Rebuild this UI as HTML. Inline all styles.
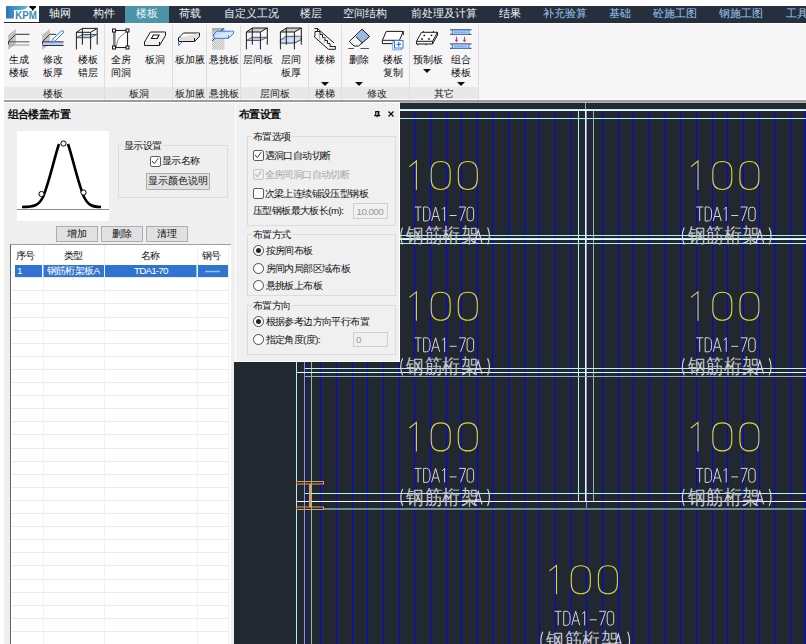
<!DOCTYPE html>
<html><head><meta charset="utf-8">
<style>
*{margin:0;padding:0;box-sizing:border-box}
body{width:806px;height:644px;overflow:hidden;position:relative;background:#fff;font-family:"Liberation Sans",sans-serif;color:#000}
.a{position:absolute}
.t{position:absolute;white-space:nowrap;font-size:11.3px;line-height:12px;color:#eceff3;top:7px;margin-left:0px}
.rl{position:absolute;white-space:nowrap;font-size:9.5px;line-height:12.5px;color:#111;text-align:center}
.gl{position:absolute;white-space:nowrap;font-size:9.5px;line-height:12px;color:#222;top:88px}
.sep{position:absolute;top:25px;width:1px;height:75px;background:#dedede}
.arr{position:absolute;width:0;height:0;border-left:4px solid transparent;border-right:4px solid transparent;border-top:4px solid #111}
.p{position:absolute;white-space:nowrap;font-size:9.9px;letter-spacing:-0.6px;line-height:11px;color:#111}
.cb{position:absolute;width:10.5px;height:10.5px;border:1.4px solid #5c5c5c;border-radius:2px;background:#fff}
.rd{position:absolute;width:11px;height:11px;border:1.2px solid #4a4a4a;border-radius:50%;background:#fff}
.gb{position:absolute;border:1px solid #dcdcdc}
.btn{position:absolute;border:1px solid #adadad;background:#e1e1e1;font-size:9.6px;line-height:14px;text-align:center;color:#111}
</style></head><body>

<!-- ===== top bar ===== -->
<div class="a" style="left:39px;top:6px;width:767px;height:17px;background:#262f3d"></div>
<div class="a" style="left:125px;top:6px;width:44px;height:17px;background:#4b93a7"></div>
<div class="a" style="left:4px;top:22px;width:35px;height:1px;background:#222"></div>
<!-- logo -->
<svg class="a" style="left:0;top:0" width="40" height="22">
  <defs><linearGradient id="lg1" x1="0" x2="1"><stop offset="0" stop-color="#2e6fb0"/><stop offset="1" stop-color="#4a90c8"/></linearGradient>
  <linearGradient id="lg2" x1="0" x2="1"><stop offset="0" stop-color="#3b8fc0"/><stop offset="1" stop-color="#5cc0d0"/></linearGradient></defs>
  <rect x="6" y="6" width="8" height="12.5" rx="1" fill="url(#lg1)"/>
  <path d="M14 6 H28 Q26 10 20 10 H14 Z" fill="url(#lg2)"/>
  <linearGradient id="lg3" x1="0" y1="0" x2="0" y2="1"><stop offset="0" stop-color="#40a8c8"/><stop offset="1" stop-color="#2a70a8"/></linearGradient><text x="15.3" y="18.5" font-family="Liberation Sans" font-weight="bold" font-size="10.6" fill="url(#lg3)" textLength="21.6" lengthAdjust="spacingAndGlyphs">KPM</text>
  <path d="M29.3 6 H36 V7.2 L33.6 9.2 V10.6 H32 V9.2 L29.3 7.2 Z" fill="#000"/>
</svg>
<div class="t" style="left:49px">轴网</div>
<div class="t" style="left:93px">构件</div>
<div class="t" style="left:136px;color:#eef4f6">楼板</div>
<div class="t" style="left:179px">荷载</div>
<div class="t" style="left:223.5px">自定义工况</div>
<div class="t" style="left:300px">楼层</div>
<div class="t" style="left:343px">空间结构</div>
<div class="t" style="left:410.5px">前处理及计算</div>
<div class="t" style="left:499px">结果</div>
<div class="t" style="left:543px;color:#9cc6ee">补充验算</div>
<div class="t" style="left:608.5px;color:#9cc6ee">基础</div>
<div class="t" style="left:653px;color:#9cc6ee">砼施工图</div>
<div class="t" style="left:719px;color:#9cc6ee">钢施工图</div>
<div class="t" style="left:785.5px;color:#9cc6ee">工具</div>

<!-- ===== ribbon ===== -->
<div class="a" style="left:4px;top:24px;width:802px;height:75px;background:#f6f6f6"></div>
<div class="a" style="left:4px;top:87px;width:475px;height:12px;background:#e8e8e8"></div>
<div class="a" style="left:4px;top:100px;width:802px;height:2px;background:#9c9c9c"></div>
<div class="a" style="left:400px;top:102px;width:406px;height:1px;background:#b4b4b4"></div>
<div class="sep" style="left:104px"></div>
<div class="sep" style="left:172px"></div>
<div class="sep" style="left:206px"></div>
<div class="sep" style="left:240px"></div>
<div class="sep" style="left:308px"></div>
<div class="sep" style="left:341px"></div>
<div class="sep" style="left:409px"></div>
<div class="sep" style="left:478px"></div>


<svg class="a" style="left:0;top:0" width="490" height="54" viewBox="0 0 490 54">
<defs>
 <linearGradient id="gw" x1="0" y1="0" x2="0" y2="1"><stop offset="0" stop-color="#b2b2b2"/><stop offset="1" stop-color="#d4d4d4"/></linearGradient>
 <linearGradient id="gt" x1="0" y1="0" x2="0" y2="1"><stop offset="0" stop-color="#a8a8a8"/><stop offset="1" stop-color="#e8e8e8"/></linearGradient>
 <pattern id="chk" width="2" height="2" patternUnits="userSpaceOnUse"><rect width="2" height="2" fill="#e6e6e6"/><rect width="1" height="1" fill="#c2c2c2"/><rect x="1" y="1" width="1" height="1" fill="#c2c2c2"/></pattern>
</defs>
<!-- 生成楼板 -->
<path d="M8.1 35 L15.8 29 V44 L8.1 50 Z" fill="#c0c0c0"/>
<path d="M8.5 44.2 V41.6 L15.8 34.3 H29.5" fill="none" stroke="#333" stroke-width="1"/>
<path d="M8.5 41.8 H29.5" stroke="#555" stroke-width="1"/>
<path d="M8.5 45 H29.5" stroke="#9a9a9a" stroke-width="1"/>
<!-- 修改板厚 -->
<path d="M42.1 35 L49.8 29 V44 L42.1 50 Z" fill="#c0c0c0"/>
<rect x="42.5" y="41.8" width="21" height="3.6" fill="#b4cdf0"/>
<path d="M42.5 44.2 V41.6 L49.8 34.3 H56" fill="none" stroke="#333" stroke-width="1"/>
<path d="M42.5 41.8 H63.5 M42.5 45.5 H63.5" stroke="#333" stroke-width="1"/>
<path d="M51.5 42.8 L53 39 L61.3 31 Q63.5 30.2 63.8 32.2 L55.5 40.6 Z" fill="#fff" stroke="#3a7ad8" stroke-width="1"/>
<!-- 楼板错层 -->
<path d="M76.4 37.7 L82.4 34.5 H96.6 L90.6 37.7 Z" fill="#b4cdf0" stroke="#333" stroke-width="0.8"/>
<path d="M76.4 49.4 V32.3 H90.6 V49.4 M82.4 44.6 V28.4 H97.2 V44.6 M76.4 32.3 L82.4 28.4 M90.6 32.3 L97.2 28.4" fill="none" stroke="#1a1a1a" stroke-width="1"/>
<!-- 全房间洞 -->
<rect x="114" y="30.5" width="13.5" height="17" fill="#fff" stroke="#222" stroke-width="1.1"/>
<path d="M116.3 47.5 C117 42 118 38 121 36 C124 34 126 32 127 30.8" fill="none" stroke="#777" stroke-width="0.9"/>
<path d="M115.5 31.5 V47" stroke="#999" stroke-width="0.8"/>
<g fill="#fff" stroke="#111" stroke-width="1"><rect x="112.5" y="29" width="3" height="3"/><rect x="126" y="29" width="3" height="3"/><rect x="112.5" y="46" width="3" height="3"/><rect x="126" y="46" width="3" height="3"/></g>
<!-- 板洞 -->
<path d="M144.5 42 L150.5 32 H165.5 L159.5 42 Z" fill="#fff" stroke="#1a1a1a" stroke-width="1"/>
<path d="M144.5 42 V45.5 H159.5 L165.5 35.5 V32 M159.5 42 V45.5" fill="#f0f0f0" stroke="#1a1a1a" stroke-width="1"/>
<path d="M151.5 38.5 L153.3 35 H159 L157.2 38.5 Z" fill="#fff" stroke="#1a1a1a" stroke-width="1.1"/>
<!-- 板加腋 -->
<path d="M178.5 38 L183.5 33 H199.5 L194.5 38 Z" fill="#fff" stroke="#1a1a1a" stroke-width="1"/>
<path d="M178.5 38 V41.5 H194.5 L199.5 36.5 V33 M194.5 38 V41.5" fill="#e0e0e0" stroke="#1a1a1a" stroke-width="1"/>
<path d="M178.5 41.5 V45.5 L182.5 41.5" fill="none" stroke="#3a7ad8" stroke-width="1"/>
<!-- 悬挑板 -->
<rect x="212" y="28" width="12.5" height="9" fill="url(#gt)"/>
<rect x="212" y="37" width="12.5" height="12.8" fill="url(#chk)"/>
<path d="M212.3 41 L223.5 28.3" stroke="#222" stroke-width="1"/>
<path d="M212.8 35.3 L216.8 31.2 H233.5 L228.5 35.3 Z" fill="#c8dcf6" stroke="#3a7ad8" stroke-width="1"/>
<path d="M214 35.3 V38.3 H228.5 L233.5 33.5 V31.2 M228.5 35.3 V38.3" fill="#dbe8fa" stroke="#3a7ad8" stroke-width="1"/>
<!-- 层间板 -->
<path d="M246.4 32 L252.3 28 H267.3 L260.4 32 Z" fill="#cfcfcf"/>
<path d="M246.4 40.5 L252.3 37.3 H267.3 L260.4 40.5 Z" fill="#b4cdf0" stroke="#444" stroke-width="0.8"/>
<path d="M246.4 49.4 V32 H260.4 V49.4 M252.3 44.7 V28 H267.3 V44.7 M246.4 32 L252.3 28 M260.4 32 L267.3 28" fill="none" stroke="#1a1a1a" stroke-width="1"/>
<!-- 层间板厚 -->
<path d="M280.4 32 L286.3 28 H301.3 L294.4 32 Z" fill="#cfcfcf"/>
<path d="M280.4 39.9 L286.3 36.3 H301.3 L294.4 39.9 Z" fill="#b4cdf0" stroke="#444" stroke-width="0.8"/>
<path d="M280.4 39.9 V43.1 H294.4 L301.3 39.5 V36.3 M294.4 39.9 V43.1" fill="#cfe0f8" stroke="#333" stroke-width="0.9"/>
<path d="M280.4 49.4 V32 H294.4 V49.4 M286.3 44.7 V28 H301.3 V44.7 M280.4 32 L286.3 28 M294.4 32 L301.3 28" fill="none" stroke="#1a1a1a" stroke-width="1"/>
<!-- 楼梯 -->
<path d="M314.5 28.5 H317.5 L334 43 M317.5 28.5 V31.5 H315 V34.5 L314.5 37 L328.5 49.3 H335.3 V46" fill="none" stroke="#1a1a1a" stroke-width="1"/>
<path d="M317.5 31.5 H320 V34.5 H322.5 V37.5 H325 V40.5 H327.5 V43.5 H330 V46.5 H335.3" fill="none" stroke="#1a1a1a" stroke-width="1"/>
<path d="M319 33 L320 40 M324 37 L324.5 43" stroke="#999" stroke-width="0.8"/>
<!-- 删除 -->
<path d="M362 29.2 L369.6 36.5 L362.3 43 L355.8 36.6 Z" fill="#9ab9e8"/>
<path d="M362 29.2 L369.6 36.5 L358.5 46 H354 L349.3 41.5 Z M355.8 36.6 L362.3 43" fill="none" stroke="#1a1a1a" stroke-width="1"/>
<path d="M348.2 48.5 H354 M360.4 48.5 H369" stroke="#555" stroke-width="1"/>
<!-- 楼板复制 -->
<path d="M382.4 40.3 L386.3 31.4 H403.3 L399.4 40.3 Z" fill="#fff" stroke="#1a1a1a" stroke-width="1"/>
<path d="M382.4 40.3 V43.6 H393 M399.4 40.3 V41 M403.3 31.4 V35" fill="none" stroke="#1a1a1a" stroke-width="1"/>
<rect x="392.8" y="41.8" width="8.5" height="8" fill="#fff" stroke="#7aa6e6" stroke-width="1"/>
<rect x="394.5" y="40.5" width="8.5" height="7.5" fill="#fff" stroke="#3a7ad8" stroke-width="1"/>
<path d="M398.7 42 V46.5 M396.5 44.3 H401" stroke="#3a7ad8" stroke-width="1.3"/>
<!-- 预制板 -->
<path d="M416.5 41.3 L421.5 32.3 H437.5 L432.5 41.3 Z" fill="#fff" stroke="#1a1a1a" stroke-width="1"/>
<path d="M416.5 41.3 V44 H432.5 L437.5 35 V32.3 M432.5 41.3 V44" fill="none" stroke="#1a1a1a" stroke-width="1"/>
<g fill="#1a1a1a"><circle cx="424.3" cy="35.3" r="0.9"/><circle cx="431.5" cy="35.3" r="0.9"/><circle cx="422" cy="39" r="0.9"/><circle cx="429" cy="39" r="0.9"/></g>
<path d="M423.5 32.3 V31 M433.5 32.3 V31 M418 44 V45.3 M426 44 V45.3" stroke="#1a1a1a" stroke-width="1"/>
<!-- 组合楼板 -->
<path d="M450 29.8 H471.5 M450 34.3 H471.5 M450 44 H471.5 M450 48.3 H471.5" stroke="#222" stroke-width="0.9"/>
<rect x="452.3" y="30" width="16.6" height="4.2" fill="#cfe0f8" stroke="#3a7ad8" stroke-width="1"/>
<rect x="452.3" y="44" width="16.6" height="4.2" fill="#cfe0f8" stroke="#3a7ad8" stroke-width="1"/>
<path d="M454 32.1 H467 M454 46.1 H467" stroke="#3a7ad8" stroke-width="0.8"/>
<path d="M456.5 36.8 V41.5 M464.5 36.8 V41.5" stroke="#d04040" stroke-width="1.1"/>
<path d="M454.6 39.8 L456.5 42.3 L458.4 39.8 Z M462.6 39.8 L464.5 42.3 L466.4 39.8 Z" fill="#d04040"/>
</svg>


<div class="rl" style="left:9px;top:54px">生成<br>楼板</div>
<div class="rl" style="left:43px;top:54px">修改<br>板厚</div>
<div class="rl" style="left:77.5px;top:54px">楼板<br>错层</div>
<div class="rl" style="left:111px;top:54px">全房<br>间洞</div>
<div class="rl" style="left:145px;top:54px">板洞</div>
<div class="rl" style="left:174.5px;top:54px">板加腋</div>
<div class="rl" style="left:208.5px;top:54px">悬挑板</div>
<div class="rl" style="left:242.5px;top:54px">层间板</div>
<div class="rl" style="left:280.5px;top:54px">层间<br>板厚</div>
<div class="rl" style="left:315px;top:54px">楼梯</div>
<div class="rl" style="left:349px;top:54px">删除</div>
<div class="rl" style="left:383px;top:54px">楼板<br>复制</div>
<div class="rl" style="left:412.5px;top:54px">预制板</div>
<div class="rl" style="left:450.5px;top:54px">组合<br>楼板</div>
<div class="arr" style="left:321px;top:82px"></div>
<div class="arr" style="left:355px;top:82px"></div>
<div class="arr" style="left:423px;top:69px"></div>
<div class="arr" style="left:457px;top:82px"></div>

<div class="gl" style="left:43px">楼板</div>
<div class="gl" style="left:128.5px">板洞</div>
<div class="gl" style="left:174.5px">板加腋</div>
<div class="gl" style="left:208.5px">悬挑板</div>
<div class="gl" style="left:260px">层间板</div>
<div class="gl" style="left:315px">楼梯</div>
<div class="gl" style="left:366.5px">修改</div>
<div class="gl" style="left:434px">其它</div>

<!-- ===== left panel ===== -->
<div class="a" style="left:4px;top:103px;width:231px;height:541px;background:#efefef"></div>
<div class="p" style="left:7.5px;top:108px;font-size:11px;line-height:12px;font-weight:bold">组合楼盖布置</div>


<!-- image box -->
<svg class="a" style="left:17px;top:131px" width="92" height="90">
  <rect width="92" height="90" fill="#fff"/>
  <line x1="0" y1="78.5" x2="92" y2="78.5" stroke="#8a8a8a" stroke-width="1"/>
  <path d="M5 76 C18 76 22 74 26 66 C32 52 37 28 42 13" fill="none" stroke="#000" stroke-width="2.6"/>
  <path d="M51 13 C56 28 61 52 67 66 C71 74 75 76 84 76" fill="none" stroke="#000" stroke-width="2.6"/>
  <circle cx="46.5" cy="12.5" r="2.6" fill="#fff" stroke="#000" stroke-width="1"/>
  <circle cx="24.5" cy="63" r="2.6" fill="#fff" stroke="#000" stroke-width="1"/>
  <circle cx="66.5" cy="61.5" r="2.6" fill="#fff" stroke="#000" stroke-width="1"/>
</svg>
<div class="gb" style="left:117.5px;top:145px;width:110.5px;height:53px"></div>
<div class="p" style="left:123px;top:140px;padding:0 1px;background:#efefef">显示设置</div>
<div class="cb" style="left:150px;top:156px"></div>
<svg class="a" style="left:150px;top:156px" width="10" height="10"><path d="M2 5 L4.3 7.6 L8.3 2.2" fill="none" stroke="#3a3a3a" stroke-width="1"/></svg>
<div class="p" style="left:162px;top:155px">显示名称</div>
<div class="btn" style="left:146px;top:173px;width:64px;height:17px">显示颜色说明</div>
<div class="btn" style="left:56px;top:226px;width:42px;height:16px">增加</div>
<div class="btn" style="left:101px;top:226px;width:42px;height:16px">删除</div>
<div class="btn" style="left:146px;top:226px;width:42px;height:16px">清理</div>
<!-- table -->
<div class="a" style="left:10px;top:244px;width:221px;height:400px;background:#fff;border-left:1px solid #646464;border-top:1px solid #a0a0a0"></div>
<svg class="a" style="left:11px;top:245px" width="220" height="399">
<line x1="1" y1="32.5" x2="218" y2="32.5" stroke="#ebebeb" stroke-width="1"/>
<line x1="1" y1="45.5" x2="218" y2="45.5" stroke="#ebebeb" stroke-width="1"/>
<line x1="1" y1="58.5" x2="218" y2="58.5" stroke="#ebebeb" stroke-width="1"/>
<line x1="1" y1="72.5" x2="218" y2="72.5" stroke="#ebebeb" stroke-width="1"/>
<line x1="1" y1="85.5" x2="218" y2="85.5" stroke="#ebebeb" stroke-width="1"/>
<line x1="1" y1="98.5" x2="218" y2="98.5" stroke="#ebebeb" stroke-width="1"/>
<line x1="1" y1="111.5" x2="218" y2="111.5" stroke="#ebebeb" stroke-width="1"/>
<line x1="1" y1="124.5" x2="218" y2="124.5" stroke="#ebebeb" stroke-width="1"/>
<line x1="1" y1="137.5" x2="218" y2="137.5" stroke="#ebebeb" stroke-width="1"/>
<line x1="1" y1="150.5" x2="218" y2="150.5" stroke="#ebebeb" stroke-width="1"/>
<line x1="1" y1="163.5" x2="218" y2="163.5" stroke="#ebebeb" stroke-width="1"/>
<line x1="1" y1="176.5" x2="218" y2="176.5" stroke="#ebebeb" stroke-width="1"/>
<line x1="1" y1="189.5" x2="218" y2="189.5" stroke="#ebebeb" stroke-width="1"/>
<line x1="1" y1="203.5" x2="218" y2="203.5" stroke="#ebebeb" stroke-width="1"/>
<line x1="1" y1="216.5" x2="218" y2="216.5" stroke="#ebebeb" stroke-width="1"/>
<line x1="1" y1="229.5" x2="218" y2="229.5" stroke="#ebebeb" stroke-width="1"/>
<line x1="1" y1="242.5" x2="218" y2="242.5" stroke="#ebebeb" stroke-width="1"/>
<line x1="1" y1="255.5" x2="218" y2="255.5" stroke="#ebebeb" stroke-width="1"/>
<line x1="1" y1="268.5" x2="218" y2="268.5" stroke="#ebebeb" stroke-width="1"/>
<line x1="1" y1="281.5" x2="218" y2="281.5" stroke="#ebebeb" stroke-width="1"/>
<line x1="1" y1="294.5" x2="218" y2="294.5" stroke="#ebebeb" stroke-width="1"/>
<line x1="1" y1="307.5" x2="218" y2="307.5" stroke="#ebebeb" stroke-width="1"/>
<line x1="1" y1="320.5" x2="218" y2="320.5" stroke="#ebebeb" stroke-width="1"/>
<line x1="1" y1="334.5" x2="218" y2="334.5" stroke="#ebebeb" stroke-width="1"/>
<line x1="1" y1="347.5" x2="218" y2="347.5" stroke="#ebebeb" stroke-width="1"/>
<line x1="1" y1="360.5" x2="218" y2="360.5" stroke="#ebebeb" stroke-width="1"/>
<line x1="1" y1="373.5" x2="218" y2="373.5" stroke="#ebebeb" stroke-width="1"/>
<line x1="1" y1="386.5" x2="218" y2="386.5" stroke="#ebebeb" stroke-width="1"/>
<line x1="32.5" y1="0" x2="32.5" y2="399" stroke="#f1f1f1" stroke-width="1"/>
<line x1="93.5" y1="0" x2="93.5" y2="399" stroke="#f1f1f1" stroke-width="1"/>
<line x1="186.5" y1="0" x2="186.5" y2="399" stroke="#f1f1f1" stroke-width="1"/>
<line x1="217.5" y1="0" x2="217.5" y2="399" stroke="#f0f0f0" stroke-width="1"/>
<rect x="4" y="20" width="27" height="12" fill="#2f74d0"/>
<rect x="32.5" y="20" width="60.5" height="12" fill="#2f74d0"/>
<rect x="94" y="20" width="91.5" height="12" fill="#2f74d0"/>
<rect x="187" y="20" width="30" height="12" fill="#2f74d0"/>
<line x1="194" y1="26.5" x2="209" y2="26.5" stroke="#8cc0f0" stroke-width="1.5"/>
</svg>
<div class="p" style="left:15.5px;top:250px">序号</div>
<div class="p" style="left:63.5px;top:250px">类型</div>
<div class="p" style="left:141px;top:250px">名称</div>
<div class="p" style="left:202px;top:250px">钢号</div>
<div class="p" style="left:17px;top:265px;color:#fff">1</div>
<div class="p" style="left:46.5px;top:265px;color:#fff">钢筋桁架板A</div>
<div class="p" style="left:134px;top:265px;color:#fff;letter-spacing:-0.85px">TDA1-70</div>


<!-- ===== canvas ===== -->
<svg class="a" style="left:234px;top:103px" width="572" height="541" viewBox="0 0 572 541">
<rect width="572" height="541" fill="#222830"/>
<line x1="86.5" y1="8" x2="86.5" y2="541" stroke="#0000f2" stroke-width="1"/>
<line x1="102.5" y1="8" x2="102.5" y2="541" stroke="#0000f2" stroke-width="1"/>
<line x1="118.5" y1="8" x2="118.5" y2="541" stroke="#0000f2" stroke-width="1"/>
<line x1="133.5" y1="8" x2="133.5" y2="541" stroke="#0000f2" stroke-width="1"/>
<line x1="149.5" y1="8" x2="149.5" y2="541" stroke="#0000f2" stroke-width="1"/>
<line x1="165.5" y1="8" x2="165.5" y2="541" stroke="#0000f2" stroke-width="1"/>
<line x1="180.5" y1="8" x2="180.5" y2="541" stroke="#0000f2" stroke-width="1"/>
<line x1="196.5" y1="8" x2="196.5" y2="541" stroke="#0000f2" stroke-width="1"/>
<line x1="212.5" y1="8" x2="212.5" y2="541" stroke="#0000f2" stroke-width="1"/>
<line x1="227.5" y1="8" x2="227.5" y2="541" stroke="#0000f2" stroke-width="1"/>
<line x1="243.5" y1="8" x2="243.5" y2="541" stroke="#0000f2" stroke-width="1"/>
<line x1="258.5" y1="8" x2="258.5" y2="541" stroke="#0000f2" stroke-width="1"/>
<line x1="274.5" y1="8" x2="274.5" y2="541" stroke="#0000f2" stroke-width="1"/>
<line x1="290.5" y1="8" x2="290.5" y2="541" stroke="#0000f2" stroke-width="1"/>
<line x1="305.5" y1="8" x2="305.5" y2="541" stroke="#0000f2" stroke-width="1"/>
<line x1="321.5" y1="8" x2="321.5" y2="541" stroke="#0000f2" stroke-width="1"/>
<line x1="337.5" y1="8" x2="337.5" y2="541" stroke="#0000f2" stroke-width="1"/>
<line x1="352.5" y1="8" x2="352.5" y2="541" stroke="#0000f2" stroke-width="1"/>
<line x1="368.5" y1="8" x2="368.5" y2="541" stroke="#0000f2" stroke-width="1"/>
<line x1="384.5" y1="8" x2="384.5" y2="541" stroke="#0000f2" stroke-width="1"/>
<line x1="399.5" y1="8" x2="399.5" y2="541" stroke="#0000f2" stroke-width="1"/>
<line x1="415.5" y1="8" x2="415.5" y2="541" stroke="#0000f2" stroke-width="1"/>
<line x1="431.5" y1="8" x2="431.5" y2="541" stroke="#0000f2" stroke-width="1"/>
<line x1="446.5" y1="8" x2="446.5" y2="541" stroke="#0000f2" stroke-width="1"/>
<line x1="462.5" y1="8" x2="462.5" y2="541" stroke="#0000f2" stroke-width="1"/>
<line x1="478.5" y1="8" x2="478.5" y2="541" stroke="#0000f2" stroke-width="1"/>
<line x1="493.5" y1="8" x2="493.5" y2="541" stroke="#0000f2" stroke-width="1"/>
<line x1="509.5" y1="8" x2="509.5" y2="541" stroke="#0000f2" stroke-width="1"/>
<line x1="525.5" y1="8" x2="525.5" y2="541" stroke="#0000f2" stroke-width="1"/>
<line x1="540.5" y1="8" x2="540.5" y2="541" stroke="#0000f2" stroke-width="1"/>
<line x1="556.5" y1="8" x2="556.5" y2="541" stroke="#0000f2" stroke-width="1"/>
<line x1="571.5" y1="8" x2="571.5" y2="541" stroke="#0000f2" stroke-width="1"/>
<line x1="62.5" y1="0" x2="62.5" y2="541" stroke="#b4f2f2" stroke-width="1"/>
<line x1="70.5" y1="0" x2="70.5" y2="541" stroke="#9090f0" stroke-width="1"/>
<line x1="71.5" y1="0" x2="71.5" y2="541" stroke="#121a5a" stroke-width="1"/>
<line x1="77.5" y1="0" x2="77.5" y2="541" stroke="#8fb8b8" stroke-width="1"/>
<line x1="344.5" y1="7" x2="344.5" y2="398" stroke="#b4f2f2" stroke-width="1"/>
<line x1="359.5" y1="7" x2="359.5" y2="398" stroke="#8fb8b8" stroke-width="1"/>
<line x1="351.5" y1="0" x2="351.5" y2="6" stroke="#8ab4b4" stroke-width="1"/>
<line x1="351.5" y1="6" x2="351.5" y2="398" stroke="#f4f8f8" stroke-width="1"/>
<line x1="352.5" y1="7" x2="352.5" y2="406" stroke="#9090f0" stroke-width="1"/>
<line x1="62" y1="6.5" x2="572" y2="6.5" stroke="#b4f2f2" stroke-width="1"/>
<line x1="62" y1="7.5" x2="572" y2="7.5" stroke="#f4f8f8" stroke-width="1"/>
<line x1="71" y1="15.5" x2="572" y2="15.5" stroke="#b4f2f2" stroke-width="1"/>
<line x1="71" y1="132.5" x2="572" y2="132.5" stroke="#b4f2f2" stroke-width="1"/>
<line x1="71" y1="135.5" x2="572" y2="135.5" stroke="#b4f2f2" stroke-width="1"/>
<line x1="62" y1="136.5" x2="572" y2="136.5" stroke="#f4f8f8" stroke-width="1"/>
<line x1="71" y1="140.5" x2="572" y2="140.5" stroke="#b4f2f2" stroke-width="1"/>
<line x1="71" y1="265.5" x2="572" y2="265.5" stroke="#b4f2f2" stroke-width="1"/>
<line x1="62" y1="269.5" x2="572" y2="269.5" stroke="#f4f8f8" stroke-width="1"/>
<line x1="71" y1="273.5" x2="572" y2="273.5" stroke="#8fb8b8" stroke-width="1"/>
<line x1="71" y1="390.5" x2="572" y2="390.5" stroke="#b4f2f2" stroke-width="1"/>
<line x1="62" y1="398.5" x2="572" y2="398.5" stroke="#f4f8f8" stroke-width="1"/>
<line x1="90" y1="406" x2="572" y2="406" stroke="#6f8a8a" stroke-width="2"/>
<rect x="62.5" y="378.5" width="27" height="2.5" fill="none" stroke="#e0a050" stroke-width="1"/>
<rect x="62.5" y="404" width="27" height="2.5" fill="none" stroke="#e0a050" stroke-width="1"/>
<rect x="75" y="381" width="2" height="23" fill="#e0a050"/>
<path d="M175.39999999999998 63.599999999999994 L182.39999999999998 58 V87" fill="none" stroke="#dcd63c" stroke-width="1.1"/>
<path d="M197.2 69 C197.2 61 201.2 58.5 206.7 58.5 C212.2 58.5 216.2 61 216.2 69 V76 C216.2 84 212.2 86.5 206.7 86.5 C201.2 86.5 197.2 84 197.2 76 Z" fill="none" stroke="#dcd63c" stroke-width="1.1"/>
<path d="M224.29999999999995 69 C224.29999999999995 61 228.29999999999995 58.5 233.79999999999995 58.5 C239.29999999999995 58.5 243.29999999999995 61 243.29999999999995 69 V76 C243.29999999999995 84 239.29999999999995 86.5 233.79999999999995 86.5 C228.29999999999995 86.5 224.29999999999995 84 224.29999999999995 76 Z" fill="none" stroke="#dcd63c" stroke-width="1.1"/>
<path d="M180.60000000000002 104 H187.60000000000002 M184.10000000000002 104 V118 M189.60000000000002 104 V118 H192.60000000000002 Q196.10000000000002 118 196.10000000000002 111 Q196.10000000000002 104 192.60000000000002 104 Z M197.60000000000002 118 L201.60000000000002 104 L205.60000000000002 118 M199.10000000000002 113.5 H204.10000000000002 M208.10000000000002 106.5 L210.60000000000002 104 V118 M215.60000000000002 112.5 H222.60000000000002 M225.10000000000002 104 H231.60000000000002 L226.60000000000002 118" fill="none" stroke="#d4d4d4" stroke-width="1"/>
<rect x="233.10000000000002" y="104" width="6.5" height="14" rx="3.2" fill="none" stroke="#d4d4d4" stroke-width="1"/>
<path d="M168.60000000000002 124.5 Q164.89999999999998 133 168.60000000000002 141.5 M253.60000000000002 124.5 Q257.29999999999995 133 253.60000000000002 141.5" fill="none" stroke="#dcdcdc" stroke-width="1.1"/>
<g transform="translate(0 139.2) scale(1 1.14)"><text y="0" font-family="Liberation Sans" font-size="17.5" fill="#c8cacc">
<tspan x="172.10000000000002">钢</tspan>
<tspan x="190.79999999999995">筋</tspan>
<tspan x="208.10000000000002">桁</tspan>
<tspan x="226.69999999999993">架</tspan>
</text></g>
<path d="M240.39999999999998 140 L244.19999999999993 127 L248.0 140 M241.69999999999993 135.5 H246.69999999999993" fill="none" stroke="#dcdcdc" stroke-width="1.1"/>
<path d="M457 63.599999999999994 L464 58 V87" fill="none" stroke="#dcd63c" stroke-width="1.1"/>
<path d="M478.79999999999995 69 C478.79999999999995 61 482.79999999999995 58.5 488.29999999999995 58.5 C493.79999999999995 58.5 497.79999999999995 61 497.79999999999995 69 V76 C497.79999999999995 84 493.79999999999995 86.5 488.29999999999995 86.5 C482.79999999999995 86.5 478.79999999999995 84 478.79999999999995 76 Z" fill="none" stroke="#dcd63c" stroke-width="1.1"/>
<path d="M505.9 69 C505.9 61 509.9 58.5 515.4 58.5 C520.9 58.5 524.9 61 524.9 69 V76 C524.9 84 520.9 86.5 515.4 86.5 C509.9 86.5 505.9 84 505.9 76 Z" fill="none" stroke="#dcd63c" stroke-width="1.1"/>
<path d="M462.20000000000005 104 H469.20000000000005 M465.70000000000005 104 V118 M471.20000000000005 104 V118 H474.20000000000005 Q477.70000000000005 118 477.70000000000005 111 Q477.70000000000005 104 474.20000000000005 104 Z M479.20000000000005 118 L483.20000000000005 104 L487.20000000000005 118 M480.70000000000005 113.5 H485.70000000000005 M489.70000000000005 106.5 L492.20000000000005 104 V118 M497.20000000000005 112.5 H504.20000000000005 M506.70000000000005 104 H513.2 L508.20000000000005 118" fill="none" stroke="#d4d4d4" stroke-width="1"/>
<rect x="514.7" y="104" width="6.5" height="14" rx="3.2" fill="none" stroke="#d4d4d4" stroke-width="1"/>
<path d="M450.20000000000005 124.5 Q446.5 133 450.20000000000005 141.5 M535.2 124.5 Q538.9 133 535.2 141.5" fill="none" stroke="#dcdcdc" stroke-width="1.1"/>
<g transform="translate(0 139.2) scale(1 1.14)"><text y="0" font-family="Liberation Sans" font-size="17.5" fill="#c8cacc">
<tspan x="453.70000000000005">钢</tspan>
<tspan x="472.4">筋</tspan>
<tspan x="489.70000000000005">桁</tspan>
<tspan x="508.29999999999995">架</tspan>
</text></g>
<path d="M522 140 L525.8 127 L529.6 140 M523.3 135.5 H528.3" fill="none" stroke="#dcdcdc" stroke-width="1.1"/>
<path d="M175.39999999999998 194.40000000000003 L182.39999999999998 188.8 V217.8" fill="none" stroke="#dcd63c" stroke-width="1.1"/>
<path d="M197.2 199.8 C197.2 191.8 201.2 189.3 206.7 189.3 C212.2 189.3 216.2 191.8 216.2 199.8 V206.8 C216.2 214.8 212.2 217.3 206.7 217.3 C201.2 217.3 197.2 214.8 197.2 206.8 Z" fill="none" stroke="#dcd63c" stroke-width="1.1"/>
<path d="M224.29999999999995 199.8 C224.29999999999995 191.8 228.29999999999995 189.3 233.79999999999995 189.3 C239.29999999999995 189.3 243.29999999999995 191.8 243.29999999999995 199.8 V206.8 C243.29999999999995 214.8 239.29999999999995 217.3 233.79999999999995 217.3 C228.29999999999995 217.3 224.29999999999995 214.8 224.29999999999995 206.8 Z" fill="none" stroke="#dcd63c" stroke-width="1.1"/>
<path d="M180.60000000000002 234.8 H187.60000000000002 M184.10000000000002 234.8 V248.8 M189.60000000000002 234.8 V248.8 H192.60000000000002 Q196.10000000000002 248.8 196.10000000000002 241.8 Q196.10000000000002 234.8 192.60000000000002 234.8 Z M197.60000000000002 248.8 L201.60000000000002 234.8 L205.60000000000002 248.8 M199.10000000000002 244.3 H204.10000000000002 M208.10000000000002 237.3 L210.60000000000002 234.8 V248.8 M215.60000000000002 243.3 H222.60000000000002 M225.10000000000002 234.8 H231.60000000000002 L226.60000000000002 248.8" fill="none" stroke="#d4d4d4" stroke-width="1"/>
<rect x="233.10000000000002" y="234.8" width="6.5" height="14" rx="3.2" fill="none" stroke="#d4d4d4" stroke-width="1"/>
<path d="M168.60000000000002 255.3 Q164.89999999999998 263.8 168.60000000000002 272.3 M253.60000000000002 255.3 Q257.29999999999995 263.8 253.60000000000002 272.3" fill="none" stroke="#dcdcdc" stroke-width="1.1"/>
<g transform="translate(0 270.0) scale(1 1.14)"><text y="0" font-family="Liberation Sans" font-size="17.5" fill="#c8cacc">
<tspan x="172.10000000000002">钢</tspan>
<tspan x="190.79999999999995">筋</tspan>
<tspan x="208.10000000000002">桁</tspan>
<tspan x="226.69999999999993">架</tspan>
</text></g>
<path d="M240.39999999999998 270.8 L244.19999999999993 257.8 L248.0 270.8 M241.69999999999993 266.3 H246.69999999999993" fill="none" stroke="#dcdcdc" stroke-width="1.1"/>
<path d="M457 194.40000000000003 L464 188.8 V217.8" fill="none" stroke="#dcd63c" stroke-width="1.1"/>
<path d="M478.79999999999995 199.8 C478.79999999999995 191.8 482.79999999999995 189.3 488.29999999999995 189.3 C493.79999999999995 189.3 497.79999999999995 191.8 497.79999999999995 199.8 V206.8 C497.79999999999995 214.8 493.79999999999995 217.3 488.29999999999995 217.3 C482.79999999999995 217.3 478.79999999999995 214.8 478.79999999999995 206.8 Z" fill="none" stroke="#dcd63c" stroke-width="1.1"/>
<path d="M505.9 199.8 C505.9 191.8 509.9 189.3 515.4 189.3 C520.9 189.3 524.9 191.8 524.9 199.8 V206.8 C524.9 214.8 520.9 217.3 515.4 217.3 C509.9 217.3 505.9 214.8 505.9 206.8 Z" fill="none" stroke="#dcd63c" stroke-width="1.1"/>
<path d="M462.20000000000005 234.8 H469.20000000000005 M465.70000000000005 234.8 V248.8 M471.20000000000005 234.8 V248.8 H474.20000000000005 Q477.70000000000005 248.8 477.70000000000005 241.8 Q477.70000000000005 234.8 474.20000000000005 234.8 Z M479.20000000000005 248.8 L483.20000000000005 234.8 L487.20000000000005 248.8 M480.70000000000005 244.3 H485.70000000000005 M489.70000000000005 237.3 L492.20000000000005 234.8 V248.8 M497.20000000000005 243.3 H504.20000000000005 M506.70000000000005 234.8 H513.2 L508.20000000000005 248.8" fill="none" stroke="#d4d4d4" stroke-width="1"/>
<rect x="514.7" y="234.8" width="6.5" height="14" rx="3.2" fill="none" stroke="#d4d4d4" stroke-width="1"/>
<path d="M450.20000000000005 255.3 Q446.5 263.8 450.20000000000005 272.3 M535.2 255.3 Q538.9 263.8 535.2 272.3" fill="none" stroke="#dcdcdc" stroke-width="1.1"/>
<g transform="translate(0 270.0) scale(1 1.14)"><text y="0" font-family="Liberation Sans" font-size="17.5" fill="#c8cacc">
<tspan x="453.70000000000005">钢</tspan>
<tspan x="472.4">筋</tspan>
<tspan x="489.70000000000005">桁</tspan>
<tspan x="508.29999999999995">架</tspan>
</text></g>
<path d="M522 270.8 L525.8 257.8 L529.6 270.8 M523.3 266.3 H528.3" fill="none" stroke="#dcdcdc" stroke-width="1.1"/>
<path d="M175.39999999999998 325.0 L182.39999999999998 319.4 V348.4" fill="none" stroke="#dcd63c" stroke-width="1.1"/>
<path d="M197.2 330.4 C197.2 322.4 201.2 319.9 206.7 319.9 C212.2 319.9 216.2 322.4 216.2 330.4 V337.4 C216.2 345.4 212.2 347.9 206.7 347.9 C201.2 347.9 197.2 345.4 197.2 337.4 Z" fill="none" stroke="#dcd63c" stroke-width="1.1"/>
<path d="M224.29999999999995 330.4 C224.29999999999995 322.4 228.29999999999995 319.9 233.79999999999995 319.9 C239.29999999999995 319.9 243.29999999999995 322.4 243.29999999999995 330.4 V337.4 C243.29999999999995 345.4 239.29999999999995 347.9 233.79999999999995 347.9 C228.29999999999995 347.9 224.29999999999995 345.4 224.29999999999995 337.4 Z" fill="none" stroke="#dcd63c" stroke-width="1.1"/>
<path d="M180.60000000000002 365.4 H187.60000000000002 M184.10000000000002 365.4 V379.4 M189.60000000000002 365.4 V379.4 H192.60000000000002 Q196.10000000000002 379.4 196.10000000000002 372.4 Q196.10000000000002 365.4 192.60000000000002 365.4 Z M197.60000000000002 379.4 L201.60000000000002 365.4 L205.60000000000002 379.4 M199.10000000000002 374.9 H204.10000000000002 M208.10000000000002 367.9 L210.60000000000002 365.4 V379.4 M215.60000000000002 373.9 H222.60000000000002 M225.10000000000002 365.4 H231.60000000000002 L226.60000000000002 379.4" fill="none" stroke="#d4d4d4" stroke-width="1"/>
<rect x="233.10000000000002" y="365.4" width="6.5" height="14" rx="3.2" fill="none" stroke="#d4d4d4" stroke-width="1"/>
<path d="M168.60000000000002 385.9 Q164.89999999999998 394.4 168.60000000000002 402.9 M253.60000000000002 385.9 Q257.29999999999995 394.4 253.60000000000002 402.9" fill="none" stroke="#dcdcdc" stroke-width="1.1"/>
<g transform="translate(0 400.59999999999997) scale(1 1.14)"><text y="0" font-family="Liberation Sans" font-size="17.5" fill="#c8cacc">
<tspan x="172.10000000000002">钢</tspan>
<tspan x="190.79999999999995">筋</tspan>
<tspan x="208.10000000000002">桁</tspan>
<tspan x="226.69999999999993">架</tspan>
</text></g>
<path d="M240.39999999999998 401.4 L244.19999999999993 388.4 L248.0 401.4 M241.69999999999993 396.9 H246.69999999999993" fill="none" stroke="#dcdcdc" stroke-width="1.1"/>
<path d="M457 325.0 L464 319.4 V348.4" fill="none" stroke="#dcd63c" stroke-width="1.1"/>
<path d="M478.79999999999995 330.4 C478.79999999999995 322.4 482.79999999999995 319.9 488.29999999999995 319.9 C493.79999999999995 319.9 497.79999999999995 322.4 497.79999999999995 330.4 V337.4 C497.79999999999995 345.4 493.79999999999995 347.9 488.29999999999995 347.9 C482.79999999999995 347.9 478.79999999999995 345.4 478.79999999999995 337.4 Z" fill="none" stroke="#dcd63c" stroke-width="1.1"/>
<path d="M505.9 330.4 C505.9 322.4 509.9 319.9 515.4 319.9 C520.9 319.9 524.9 322.4 524.9 330.4 V337.4 C524.9 345.4 520.9 347.9 515.4 347.9 C509.9 347.9 505.9 345.4 505.9 337.4 Z" fill="none" stroke="#dcd63c" stroke-width="1.1"/>
<path d="M462.20000000000005 365.4 H469.20000000000005 M465.70000000000005 365.4 V379.4 M471.20000000000005 365.4 V379.4 H474.20000000000005 Q477.70000000000005 379.4 477.70000000000005 372.4 Q477.70000000000005 365.4 474.20000000000005 365.4 Z M479.20000000000005 379.4 L483.20000000000005 365.4 L487.20000000000005 379.4 M480.70000000000005 374.9 H485.70000000000005 M489.70000000000005 367.9 L492.20000000000005 365.4 V379.4 M497.20000000000005 373.9 H504.20000000000005 M506.70000000000005 365.4 H513.2 L508.20000000000005 379.4" fill="none" stroke="#d4d4d4" stroke-width="1"/>
<rect x="514.7" y="365.4" width="6.5" height="14" rx="3.2" fill="none" stroke="#d4d4d4" stroke-width="1"/>
<path d="M450.20000000000005 385.9 Q446.5 394.4 450.20000000000005 402.9 M535.2 385.9 Q538.9 394.4 535.2 402.9" fill="none" stroke="#dcdcdc" stroke-width="1.1"/>
<g transform="translate(0 400.59999999999997) scale(1 1.14)"><text y="0" font-family="Liberation Sans" font-size="17.5" fill="#c8cacc">
<tspan x="453.70000000000005">钢</tspan>
<tspan x="472.4">筋</tspan>
<tspan x="489.70000000000005">桁</tspan>
<tspan x="508.29999999999995">架</tspan>
</text></g>
<path d="M522 401.4 L525.8 388.4 L529.6 401.4 M523.3 396.9 H528.3" fill="none" stroke="#dcdcdc" stroke-width="1.1"/>
<path d="M315.5 467.9 L322.5 462.29999999999995 V491.29999999999995" fill="none" stroke="#dcd63c" stroke-width="1.1"/>
<path d="M337.29999999999995 473.29999999999995 C337.29999999999995 465.29999999999995 341.29999999999995 462.79999999999995 346.79999999999995 462.79999999999995 C352.29999999999995 462.79999999999995 356.29999999999995 465.29999999999995 356.29999999999995 473.29999999999995 V480.29999999999995 C356.29999999999995 488.29999999999995 352.29999999999995 490.79999999999995 346.79999999999995 490.79999999999995 C341.29999999999995 490.79999999999995 337.29999999999995 488.29999999999995 337.29999999999995 480.29999999999995 Z" fill="none" stroke="#dcd63c" stroke-width="1.1"/>
<path d="M364.4 473.29999999999995 C364.4 465.29999999999995 368.4 462.79999999999995 373.9 462.79999999999995 C379.4 462.79999999999995 383.4 465.29999999999995 383.4 473.29999999999995 V480.29999999999995 C383.4 488.29999999999995 379.4 490.79999999999995 373.9 490.79999999999995 C368.4 490.79999999999995 364.4 488.29999999999995 364.4 480.29999999999995 Z" fill="none" stroke="#dcd63c" stroke-width="1.1"/>
<path d="M320.70000000000005 508.29999999999995 H327.70000000000005 M324.20000000000005 508.29999999999995 V522.3 M329.70000000000005 508.29999999999995 V522.3 H332.70000000000005 Q336.20000000000005 522.3 336.20000000000005 515.3 Q336.20000000000005 508.29999999999995 332.70000000000005 508.29999999999995 Z M337.70000000000005 522.3 L341.70000000000005 508.29999999999995 L345.70000000000005 522.3 M339.20000000000005 517.8 H344.20000000000005 M348.20000000000005 510.79999999999995 L350.70000000000005 508.29999999999995 V522.3 M355.70000000000005 516.8 H362.70000000000005 M365.20000000000005 508.29999999999995 H371.70000000000005 L366.70000000000005 522.3" fill="none" stroke="#d4d4d4" stroke-width="1"/>
<rect x="373.20000000000005" y="508.29999999999995" width="6.5" height="14" rx="3.2" fill="none" stroke="#d4d4d4" stroke-width="1"/>
<path d="M308.70000000000005 528.8 Q305.0 537.3 308.70000000000005 545.8 M393.70000000000005 528.8 Q397.4 537.3 393.70000000000005 545.8" fill="none" stroke="#dcdcdc" stroke-width="1.1"/>
<g transform="translate(0 543.5) scale(1 1.14)"><text y="0" font-family="Liberation Sans" font-size="17.5" fill="#c8cacc">
<tspan x="312.20000000000005">钢</tspan>
<tspan x="330.9">筋</tspan>
<tspan x="348.20000000000005">桁</tspan>
<tspan x="366.79999999999995">架</tspan>
</text></g>
<path d="M380.5 544.3 L384.29999999999995 531.3 L388.1 544.3 M381.79999999999995 539.8 H386.79999999999995" fill="none" stroke="#dcdcdc" stroke-width="1.1"/>
</svg>

<!-- ===== float panel ===== -->

<div class="a" style="left:234px;top:103px;width:1px;height:259px;background:#efefef"></div>
<div class="a" style="left:235px;top:103px;width:165px;height:259px;background:#f0f0f0;border-left:1px solid #fff;border-right:1px solid #fff;border-bottom:1px solid #fff"></div>
<div class="p" style="left:239px;top:108px;font-size:11px;line-height:12px;font-weight:bold">布置设置</div>
<svg class="a" style="left:372px;top:109px" width="24" height="10">
  <path d="M3.2 2.6 H7.4 M3.7 2.6 V6.2 M6.6 2.6 V6.2 M2.2 6.6 H8.4 M5.2 6.6 V8.3" fill="none" stroke="#111" stroke-width="1.2"/><rect x="5.6" y="2.2" width="1.6" height="4.2" fill="#111"/>
  <path d="M16.5 2.5 L21.5 7.5 M21.5 2.5 L16.5 7.5" fill="none" stroke="#111" stroke-width="1.3"/>
</svg>
<div class="gb" style="left:247px;top:136px;width:149px;height:90px"></div>
<div class="p" style="left:252px;top:131px;padding:0 1px;background:#f0f0f0">布置选项</div>
<div class="cb" style="left:253px;top:150px"></div>
<svg class="a" style="left:253px;top:150px" width="10" height="10"><path d="M2 5 L4.3 7.6 L8.3 2.2" fill="none" stroke="#3a3a3a" stroke-width="1"/></svg>
<div class="p" style="left:264.5px;top:149.5px">遇洞口自动切断</div>
<div class="cb" style="left:253px;top:169px;border-color:#c4c4c4;background:#f0f0f0"></div>
<svg class="a" style="left:253px;top:169px" width="10" height="10"><path d="M2 5 L4.3 7.6 L8.3 2.2" fill="none" stroke="#b8b8b8" stroke-width="1.1"/></svg>
<div class="p" style="left:264.5px;top:168.5px;color:#a8a8a8">全房间洞口自动切断</div>
<div class="cb" style="left:253px;top:188px"></div>
<div class="p" style="left:264.5px;top:187.5px">次梁上连续铺设压型钢板</div>
<div class="p" style="left:253px;top:205px">压型钢板最大板长(m):</div>
<div class="a" style="left:353px;top:203px;width:35px;height:16px;border:1px solid #cfcfcf;background:#f0f0f0"></div>
<div class="p" style="left:356.5px;top:205.5px;color:#9a9a9a">10.000</div>

<div class="gb" style="left:247px;top:234px;width:149px;height:62px"></div>
<div class="p" style="left:252px;top:229px;padding:0 1px;background:#f0f0f0">布置方式</div>
<div class="rd" style="left:253px;top:245px"></div><div class="a" style="left:256px;top:248px;width:5px;height:5px;border-radius:50%;background:#222"></div>
<div class="p" style="left:265.5px;top:245px">按房间布板</div>
<div class="rd" style="left:253px;top:262.5px"></div>
<div class="p" style="left:265.5px;top:262.5px">房间内局部区域布板</div>
<div class="rd" style="left:253px;top:280px"></div>
<div class="p" style="left:265.5px;top:280px">悬挑板上布板</div>

<div class="gb" style="left:247px;top:305px;width:149px;height:50px"></div>
<div class="p" style="left:252px;top:300px;padding:0 1px;background:#f0f0f0">布置方向</div>
<div class="rd" style="left:253px;top:316px"></div><div class="a" style="left:256px;top:319px;width:5px;height:5px;border-radius:50%;background:#222"></div>
<div class="p" style="left:265.5px;top:316px">根据参考边方向平行布置</div>
<div class="rd" style="left:253px;top:334px"></div>
<div class="p" style="left:265.5px;top:334px">指定角度(度):</div>
<div class="a" style="left:353px;top:332px;width:35px;height:15px;border:1px solid #cfcfcf;background:#f0f0f0"></div>
<div class="p" style="left:356px;top:334px;color:#9a9a9a">0</div>


</body></html>
